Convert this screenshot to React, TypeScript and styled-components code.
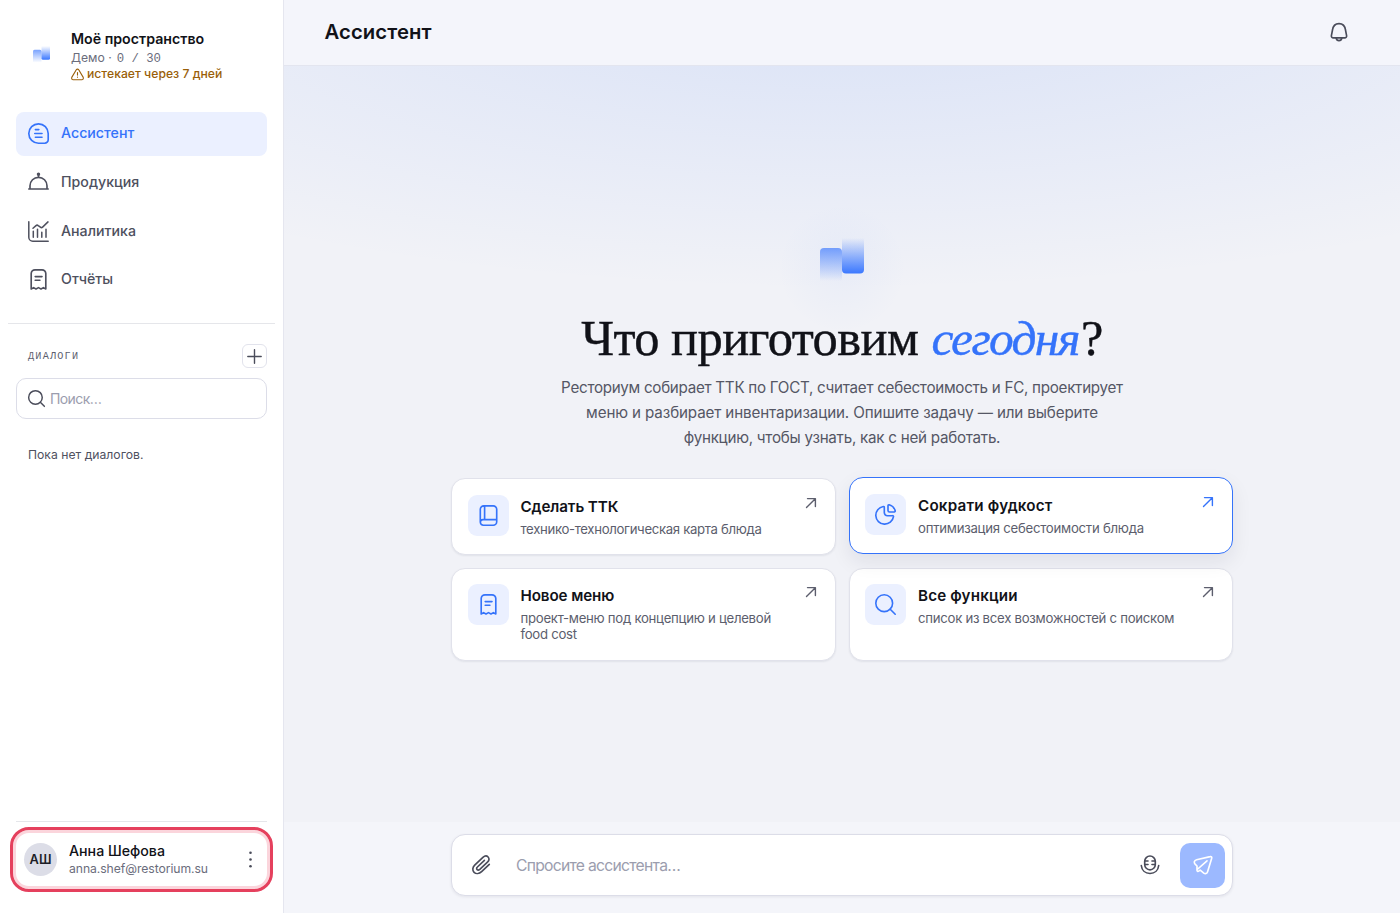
import React from "react";
import styled, { createGlobalStyle, css } from "styled-components";

const Global = createGlobalStyle`
  *, *::before, *::after { box-sizing: border-box; }
  body {
    margin: 0;
    font-family: Inter, "Liberation Sans", sans-serif;
    color: #111218;
    background: #f4f5fa;
  }
  button, input { font: inherit; }
`;

const Shell = styled.div`
  display: flex;
  height: 913px;
  width: 100%;
  overflow: hidden;
`;

/* ---------- sidebar ---------- */

const Sidebar = styled.aside`
  width: 284px;
  flex: none;
  display: flex;
  flex-direction: column;
  background: #fff;
  border-right: 1px solid #e5e6ef;
`;

const Brand = styled.div`
  display: flex;
  align-items: flex-start;
  height: 111.5px;
  padding: 29px 16px 0 33px;
`;

const BrandLogo = styled.div`
  width: 38px;
  flex: none;
  display: flex;
  margin-top: 17px;
`;

const BrandText = styled.div`
  white-space: nowrap;
`;

const SpaceName = styled.div`
  font-size: 14.2px;
  font-weight: 600;
  line-height: 20px;
`;

const Plan = styled.div`
  height: 17px;
  font-size: 12.2px;
  line-height: 17px;
  color: #6b6d7c;
`;

const Mono = styled.span`
  font-family: "Liberation Mono", monospace;
  font-size: 12.3px;
  margin-left: 1.5px;
`;

const Expiry = styled.div`
  display: flex;
  align-items: center;
  gap: 3px;
  font-size: 12.2px;
  font-weight: 500;
  line-height: 15px;
  color: #9a5f09;
`;

const Nav = styled.nav`
  display: flex;
  flex-direction: column;
  gap: 4px;
  padding: 0 16px;
`;

const NavItem = styled.a<{ $active?: boolean }>`
  display: flex;
  align-items: center;
  gap: 12px;
  height: 44.7px;
  padding: 0 12px;
  border-radius: 8px;
  font-size: 14.2px;
  font-weight: 500;
  color: ${(p) => (p.$active ? "#3573fa" : "#4e505e")};
  background: ${(p) => (p.$active ? "#ebf0ff" : "transparent")};
`;

const NavLabel = styled.span`
  padding-bottom: 2px;
`;

const Rule = styled.hr<{ $inset: number; $top?: number }>`
  border: 0;
  height: 1px;
  flex: none;
  margin: ${(p) => p.$top ?? 0}px ${(p) => p.$inset}px 0;
  background: #e5e6ea;
`;

const DialogsHead = styled.div`
  display: flex;
  align-items: center;
  justify-content: space-between;
  padding: 0 16px 0 28px;
  margin-top: 20.5px;
  height: 24px;
`;

const DialogsLabel = styled.span`
  padding-top: 1px;
  font-family: "Liberation Mono", monospace;
  font-size: 10.2px;
  letter-spacing: 1.2px;
  color: #5c5e6d;
`;

const AddButton = styled.button`
  width: 25px;
  height: 24px;
  padding: 0;
  display: grid;
  place-items: center;
  border: 1px solid #e2e3ec;
  border-radius: 6px;
  background: #fff;
  color: #4a4c5a;
`;

const Search = styled.label`
  display: flex;
  align-items: center;
  gap: 5px;
  height: 41px;
  margin: 10px 16px 0;
  padding: 0 11px;
  border: 1px solid #dcdde8;
  border-radius: 10px;
  color: #4a4c5a;
`;

const fieldReset = css`
  border: 0;
  outline: 0;
  padding: 0;
  background: transparent;
  min-width: 0;
  flex: 1;
  &::placeholder { color: #9b9dae; opacity: 1; }
`;

const SearchInput = styled.input`
  ${fieldReset}
  font-size: 14px;
  letter-spacing: -0.6px;
`;

const Empty = styled.p`
  margin: 27px 28px 0;
  font-size: 12.2px;
  line-height: 17px;
  color: #4f515f;
`;

const Account = styled.div`
  margin: 5px 10px 21px;
  height: 65px;
  display: flex;
  align-items: center;
  padding: 0 11px;
  border: 3px solid #e5405d;
  border-radius: 19px;
  box-shadow: inset 0 0 0 3px #fbd5dc;
  color: #4a4c5a;
`;

const Spacer = styled.div`
  flex: 1;
`;

const Avatar = styled.div`
  width: 33px;
  height: 33px;
  flex: none;
  display: grid;
  place-items: center;
  border-radius: 50%;
  background: #dcdde7;
  font-size: 12.8px;
  font-weight: 600;
  color: #1c1d26;
`;

const Person = styled.div`
  flex: 1;
  margin-left: 12px;
  white-space: nowrap;
`;

const PersonName = styled.div`
  font-size: 14.2px;
  font-weight: 500;
  line-height: 18px;
  color: #111218;
`;

const PersonMail = styled.div`
  font-size: 12.2px;
  line-height: 17px;
  letter-spacing: -0.07px;
  color: #6b6d7c;
`;

/* ---------- main ---------- */

const Main = styled.main`
  flex: 1;
  min-width: 0;
  display: flex;
  flex-direction: column;
`;

const Header = styled.header`
  height: 66px;
  flex: none;
  display: flex;
  align-items: center;
  justify-content: space-between;
  padding: 0 51px 2px 40.5px;
  background: #f4f5fb;
  border-bottom: 1px solid #e3e5ef;
  color: #4a4c5a;
`;

const HeaderTitle = styled.h1`
  margin: 0;
  font-size: 20.3px;
  font-weight: 600;
  letter-spacing: 0.08px;
  color: #111218;
`;

const Stage = styled.section`
  height: 756px;
  flex: none;
  display: flex;
  flex-direction: column;
  align-items: center;
  background:
    radial-gradient(ellipse 1000px 300px at 50% -76px, rgba(59, 118, 246, 0.135), rgba(59, 118, 246, 0) 100%),
    #f1f2f7;
`;

const Emblem = styled.div`
  width: 142px;
  height: 142px;
  margin-top: 123px;
  display: grid;
  place-items: center;
  border-radius: 50%;
  background: radial-gradient(circle at 50% 56%, rgba(59, 118, 246, 0.045), rgba(59, 118, 246, 0) 60%);
`;

const Question = styled.h2`
  height: 60px;
  margin: -23px 0 0;
  font-family: "Liberation Serif", serif;
  font-size: 50.5px;
  font-weight: 400;
  line-height: 60px;
  letter-spacing: -0.55px;
  white-space: nowrap;
  -webkit-text-stroke: 0.4px currentColor;
  em {
    font-size: 49.5px;
    letter-spacing: -1.7px;
    margin: 0 2px 0 1px;
    color: #3573fa;
  }
`;

const Lead = styled.p`
  margin: 7px 0 0;
  font-size: 15.2px;
  line-height: 25px;
  text-align: center;
  color: #555765;
  white-space: nowrap;
`;

const LeadLine = styled.span<{ $track: number }>`
  display: block;
  letter-spacing: ${(p) => p.$track}px;
`;

const Cards = styled.div`
  width: 782px;
  margin-top: 28px;
  display: grid;
  grid-template-columns: 384.5px 384.5px;
  grid-template-rows: 76.5px 93px;
  justify-content: space-between;
  row-gap: 13px;
`;

const Card = styled.article<{ $raised?: boolean }>`
  display: flex;
  align-items: flex-start;
  padding: 15.5px 19px 0 15.5px;
  border: 1px solid ${(p) => (p.$raised ? "#3573fa" : "#e1e2eb")};
  border-radius: 14px;
  background: #fff;
  box-shadow: ${(p) =>
    p.$raised ? "0 8px 20px rgba(20, 24, 50, 0.08)" : "0 1px 2px rgba(20, 24, 50, 0.07)"};
  transform: ${(p) => (p.$raised ? "translateY(-1px)" : "none")};
  color: ${(p) => (p.$raised ? "#3573fa" : "#5c5e6d")};
`;

const Tile = styled.div`
  width: 41px;
  height: 41px;
  flex: none;
  display: grid;
  place-items: center;
  border-radius: 9px;
  background: #ebf0ff;
  color: #3573fa;
`;

const CardBody = styled.div`
  flex: 1;
  margin-left: 12px;
  white-space: nowrap;
`;

const CardTitle = styled.h3<{ $track: number }>`
  margin: 2px 0 0;
  font-size: 15.2px;
  font-weight: 600;
  line-height: 20px;
  letter-spacing: ${(p) => p.$track}px;
  color: #111218;
`;

const CardText = styled.p<{ $track: number }>`
  margin: 4px 0 0;
  font-size: 13.2px;
  line-height: 16.4px;
  letter-spacing: ${(p) => p.$track}px;
  color: #5c5e6d;
`;

const Corner = styled.span`
  margin-top: 3px;
`;

const Dock = styled.footer`
  flex: 1;
  display: flex;
  justify-content: center;
  align-items: flex-start;
  padding-top: 12px;
  background: #f4f5fa;
`;

const Composer = styled.div`
  width: 782px;
  height: 62px;
  display: flex;
  align-items: center;
  padding: 0 7px 0 17px;
  border: 1px solid #dcdde8;
  border-radius: 14px;
  background: #fff;
  box-shadow: 0 1px 3px rgba(20, 24, 50, 0.08);
  color: #4a4c5a;
`;

const ComposerInput = styled.input`
  ${fieldReset}
  margin-left: 23px;
  font-size: 15.7px;
  letter-spacing: -0.73px;
`;

const Send = styled.button`
  width: 45px;
  height: 45px;
  margin-left: 20px;
  padding: 0;
  display: grid;
  place-items: center;
  border: 0;
  border-radius: 10px;
  background: #9cb9ff;
  color: #fff;
`;

/* ---------- icons ---------- */

const Svg = styled.svg`
  display: block;
  flex: none;
  overflow: visible;
`;

type IconProps = { size?: number; box?: number; stroke?: number; children: React.ReactNode };

const Icon = ({ size = 21, box = 21, stroke = 1.65, children }: IconProps) => (
  <Svg
    width={size}
    height={size}
    viewBox={`0 0 ${box} ${box}`}
    fill="none"
    stroke="currentColor"
    strokeWidth={stroke}
    strokeLinecap="round"
    strokeLinejoin="round"
  >
    {children}
  </Svg>
);

const Logo = ({ width, id }: { width: number; id: string }) => (
  <svg width={width} height={width} viewBox="0 0 44 44">
    <defs>
      <linearGradient id={`${id}-l`} x1="0" y1="0" x2="0" y2="1">
        <stop offset="0" stopColor="#3b78ff" stopOpacity="0.68" />
        <stop offset="1" stopColor="#3b78ff" stopOpacity="0" />
      </linearGradient>
      <linearGradient id={`${id}-r`} x1="0" y1="1" x2="0" y2="0">
        <stop offset="0" stopColor="#3b78ff" />
        <stop offset="1" stopColor="#3b78ff" stopOpacity="0" />
      </linearGradient>
    </defs>
    <path d="M0 43V14a4 4 0 0 1 4-4h14a4 4 0 0 1 4 4v29z" fill={`url(#${id}-l)`} />
    <path d="M22 0h22v31.5a4 4 0 0 1-4 4H26a4 4 0 0 1-4-4z" fill={`url(#${id}-r)`} />
  </svg>
);

const AssistantIcon = () => (
  <Icon>
    <path d="M10.5.8a9.7 9.7 0 1 0 0 19.4h6.2a3.5 3.5 0 0 0 3.5-3.5v-6.2A9.7 9.7 0 0 0 10.5.8z" />
    <path d="M7.4 6.6h3.4M6.8 10.5h7.2M7.4 14.2h6.6" />
  </Icon>
);

const DishIcon = () => (
  <Icon>
    <path d="M.8 17h19.4M2 16.8v-3a8.5 8.5 0 0 1 17 0v3M10.5 3v2.2" />
    <circle cx="10.5" cy="2.2" r=".9" />
  </Icon>
);

const AnalyticsIcon = () => (
  <Icon stroke={1.5}>
    <path d="M.8.8v15.4a4 4 0 0 0 4 4h15.4M5.3 16.2v-6M9.5 16.2V8.3M13.8 16.2v-5M18 16.2V8.3" />
    <path d="M5 7.2l3-2.6a1.7 1.7 0 0 1 2.2 0l2.2 1.6a1.7 1.7 0 0 0 2.2-.1L20 .9" />
  </Icon>
);

const ReceiptIcon = () => (
  <Icon>
    <path d="M3.2 20V4.6A3.8 3.8 0 0 1 7 .8h7a3.8 3.8 0 0 1 3.8 3.8V20l-2.4-1.4-2.4 1.4-2.5-1.4L8 20l-2.4-1.4z" />
    <path d="M7.2 7.6h6.8M7.2 11.2h4.7" />
  </Icon>
);

const BookIcon = () => (
  <Icon>
    <path d="M2.3 17V4.3A3.5 3.5 0 0 1 5.8.8h9.4a3.5 3.5 0 0 1 3.5 3.5v12.4a3.5 3.5 0 0 1-3.5 3.5H5.4A3.1 3.1 0 0 1 2.3 17.1 2.7 2.7 0 0 1 5 14.6h13.7M6.6.9v13.6" />
  </Icon>
);

const PieIcon = () => (
  <Icon>
    <path d="M9.3 3.4a.9.9 0 0 0-1-.9 8.9 8.9 0 1 0 10.2 10.2.9.9 0 0 0-.9-1h-5.2a3.1 3.1 0 0 1-3.1-3.1z" />
    <path d="M13 1.7a1 1 0 0 1 1.2-.9 8.6 8.6 0 0 1 6 6 1 1 0 0 1-.9 1.2h-4.8A1.5 1.5 0 0 1 13 6.5z" />
  </Icon>
);

const SearchIcon = ({ size = 21 }: { size?: number }) => (
  <Icon size={size} stroke={size < 20 ? 1.8 : 1.6}>
    <circle cx="9.2" cy="9.2" r="8.4" />
    <path d="M15.2 15.2l5 5" />
  </Icon>
);

const ArrowIcon = () => (
  <Icon size={10} box={10} stroke={1.4}>
    <path d="M.5 9.5L9.3.7M1.5.6h7.9v7.9" />
  </Icon>
);

const BellIcon = () => (
  <Icon size={20} box={20}>
    <path d="M10 1.6C6.2 1.6 4 4.2 3.5 8L2.4 13.6C2.2 15 3 15.8 4.3 15.8H15.7C17 15.8 17.8 15 17.6 13.6L16.5 8C16 4.2 13.8 1.6 10 1.6z" />
    <path d="M7.2 16c.3 1.7 1.3 2.6 2.8 2.6s2.5-.9 2.8-2.6" />
  </Icon>
);

const ClipIcon = () => (
  <Icon size={24} box={24}>
    <path d="M20.3 11.4l-7.7 7.3c-2.4 2.2-5.6 2.4-7.5.6s-1.7-4.9.6-7.1l8.2-7.8c1.7-1.5 3.9-1.7 5.2-.4s1.2 3.4-.4 4.9l-7.9 7.5c-.9.8-2 .9-2.7.2s-.6-1.8.3-2.6l7-6.6" />
  </Icon>
);

const MicIcon = () => (
  <Icon size={20} box={20}>
    <rect x="4.7" y="1" width="10.6" height="13.8" rx="5.3" />
    <path d="M1.3 10.5c.5 4.7 3.8 8 8.7 8s8.2-3.3 8.7-8M5 6h3M5 9.5h3M12 6h3M12 9.5h3" />
  </Icon>
);

const SendIcon = () => (
  <Icon size={20} box={20}>
    <path d="M17.2 1.6L3.6 4.7C1.2 5.3.6 7.6 2.1 9.2L4 11v4.2c0 1 .9 1.5 1.7.9l1.5-1 3.6 3c1.5 1.1 3.2.6 3.7-1.2L18.7 3.2c.3-1.1-.4-1.9-1.5-1.6zM4.2 14.5L14 5.8" />
  </Icon>
);

const WarnIcon = () => (
  <Icon size={13} box={13} stroke={1.1}>
    <path d="M5.3 2.8L.9 10.1c-.7 1.3 0 2.6 1.4 2.6h8.4c1.4 0 2.1-1.3 1.4-2.6L7.7 2.8c-.6-.9-1.8-.9-2.4 0zM6.5 5.6v2.5M6.5 10.1v.1" />
  </Icon>
);

const PlusIcon = () => (
  <Icon size={15} box={15} stroke={1.4}>
    <path d="M7.5.8v13.4M.8 7.5h13.4" />
  </Icon>
);

const DotsIcon = () => (
  <Icon size={17} box={17} stroke={0}>
    <g fill="currentColor">
      <circle cx="8.5" cy="1.8" r="1.3" />
      <circle cx="8.5" cy="8.5" r="1.3" />
      <circle cx="8.5" cy="15.2" r="1.3" />
    </g>
  </Icon>
);

const navigation = [
  { label: "Ассистент", icon: <AssistantIcon />, active: true },
  { label: "Продукция", icon: <DishIcon /> },
  { label: "Аналитика", icon: <AnalyticsIcon /> },
  { label: "Отчёты", icon: <ReceiptIcon /> },
];

const features = [
  { title: "Сделать ТТК", lines: ["технико-технологическая карта блюда"], icon: <BookIcon />, track: -0.1, textTrack: -0.34 },
  { title: "Сократи фудкост", lines: ["оптимизация себестоимости блюда"], icon: <PieIcon />, raised: true, track: 0.2, textTrack: -0.26 },
  { title: "Новое меню", lines: ["проект-меню под концепцию и целевой", "food cost"], icon: <ReceiptIcon />, track: -0.1, textTrack: -0.28 },
  { title: "Все функции", lines: ["список из всех возможностей с поиском"], icon: <SearchIcon />, track: 0.15, textTrack: -0.28 },
];

export default function App() {
  return (
    <>
      <Global />
      <Shell>
        <Sidebar>
          <Brand>
            <BrandLogo><Logo width={17} id="brand" /></BrandLogo>
            <BrandText>
              <SpaceName>Моё пространство</SpaceName>
              <Plan>Демо · <Mono>0 / 30</Mono></Plan>
              <Expiry><WarnIcon />истекает через 7 дней</Expiry>
            </BrandText>
          </Brand>
          <Nav>
            {navigation.map((n) => (
              <NavItem key={n.label} $active={n.active}>
                {n.icon}
                <NavLabel>{n.label}</NavLabel>
              </NavItem>
            ))}
          </Nav>
          <Rule $inset={8} $top={20.5} />
          <DialogsHead>
            <DialogsLabel>ДИАЛОГИ</DialogsLabel>
            <AddButton aria-label="Новый диалог"><PlusIcon /></AddButton>
          </DialogsHead>
          <Search>
            <SearchIcon size={17} />
            <SearchInput placeholder="Поиск…" />
          </Search>
          <Empty>Пока нет диалогов.</Empty>
          <Spacer />
          <Rule $inset={16} />
          <Account>
            <Avatar>АШ</Avatar>
            <Person>
              <PersonName>Анна Шефова</PersonName>
              <PersonMail>anna.shef@restorium.su</PersonMail>
            </Person>
            <DotsIcon />
          </Account>
        </Sidebar>
        <Main>
          <Header>
            <HeaderTitle>Ассистент</HeaderTitle>
            <BellIcon />
          </Header>
          <Stage>
            <Emblem><Logo width={44} id="emblem" /></Emblem>
            <Question>Что приготовим <em>сегодня</em>?</Question>
            <Lead>
              <LeadLine $track={-0.28}>Ресториум собирает ТТК по ГОСТ, считает себестоимость и FC, проектирует</LeadLine>
              <LeadLine $track={-0.13}>меню и разбирает инвентаризации. Опишите задачу — или выберите</LeadLine>
              <LeadLine $track={-0.26}>функцию, чтобы узнать, как с ней работать.</LeadLine>
            </Lead>
            <Cards>
              {features.map((f) => (
                <Card key={f.title} $raised={f.raised}>
                  <Tile>{f.icon}</Tile>
                  <CardBody>
                    <CardTitle $track={f.track}>{f.title}</CardTitle>
                    <CardText $track={f.textTrack}>
                      {f.lines.map((l, i) => (
                        <React.Fragment key={l}>{i > 0 && <br />}{l}</React.Fragment>
                      ))}
                    </CardText>
                  </CardBody>
                  <Corner><ArrowIcon /></Corner>
                </Card>
              ))}
            </Cards>
          </Stage>
          <Dock>
            <Composer>
              <ClipIcon />
              <ComposerInput placeholder="Спросите ассистента…" />
              <MicIcon />
              <Send aria-label="Отправить"><SendIcon /></Send>
            </Composer>
          </Dock>
        </Main>
      </Shell>
    </>
  );
}
